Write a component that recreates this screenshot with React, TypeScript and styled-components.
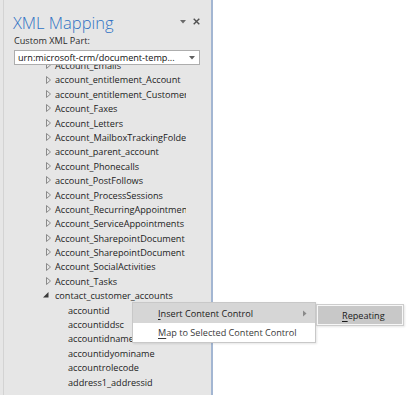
import React from "react";
import styled, { createGlobalStyle } from "styled-components";

const Global = createGlobalStyle`
  html, body { margin: 0; padding: 0; background: #ffffff; }
  body { font-family: "Open Sans", "Noto Sans", "Liberation Sans", sans-serif; }
  #root { width: 410px; height: 395px; overflow: hidden; }
`;

const Page = styled.div`
  position: relative;
  width: 410px;
  height: 395px;
  display: flex;
  background: #ffffff;
`;

const Panel = styled.div`
  position: relative;
  box-sizing: border-box;
  width: 213px;
  height: 395px;
  background: #e6e6e6;
  border-right: 2px solid #a3b6d2;
  display: flex;
  flex-direction: column;
  padding: 0 11px 0 14px;
`;

const LeftRule = styled.div`
  position: absolute;
  left: 3px;
  top: 0;
  bottom: 0;
  width: 1px;
  background: #d3d3d3;
`;

const Header = styled.div`
  display: flex;
  align-items: flex-start;
  justify-content: space-between;
  padding-top: 13px;
  height: 20px;
`;

const Title = styled.div`
  font-family: "Open Sans", "Noto Sans", sans-serif;
  font-weight: 300;
  font-size: 16.5px;
  line-height: 20px;
  color: #2f72c4;
  margin-left: -1px;
`;

const Controls = styled.div`
  display: flex;
  align-items: center;
  gap: 7px;
  margin-top: 5px;
  margin-right: 0px;
`;

const Label = styled.div`
  margin-top: 2px;
  font-size: 9.15px;
  line-height: 12px;
  color: #2a2a2a;
`;

const Select = styled.div`
  box-sizing: border-box;
  margin-top: 3px;
  height: 15px;
  border: 1px solid #adadad;
  background: #fff;
  display: flex;
  align-items: center;
  justify-content: space-between;
  padding: 0 4px 0 3px;
  font-size: 9.15px;
  line-height: 13px;
  color: #111;
`;

const Tree = styled.div`
  flex: 1;
  overflow: hidden;
  margin-right: 14px;
`;

const List = styled.div`
  margin-top: -6px;
`;

const Row = styled.div<{ $level: number }>`
  height: 14.4px;
  line-height: 14.4px;
  display: flex;
  align-items: center;
  padding-left: ${(p) => (p.$level === 1 ? 32 : 54)}px;
  font-size: 9.15px;
  color: #222;
  white-space: nowrap;
`;

const Toggle = styled.span`
  width: 9px;
  flex: none;
  display: flex;
  align-items: center;
  height: 14.4px;
`;

const Menu = styled.div`
  position: absolute;
  left: 132px;
  top: 302px;
  width: 182px;
  background: #ffffff;
  border: 1px solid #c8c8c8;
  box-shadow: 1px 1px 2px rgba(0, 0, 0, 0.1);
`;

const MenuItem = styled.div<{ $active?: boolean }>`
  display: flex;
  align-items: center;
  justify-content: space-between;
  height: ${(p) => (p.$active ? 20 : 19)}px;
  padding: 0 8px 0 25px;
  font-size: 9.15px;
  color: ${(p) => (p.$active ? "#1a1a1a" : "#3a3a3a")};
  background: ${(p) => (p.$active ? "#d6d6d6" : "transparent")};
`;

const SubMenu = styled.div`
  position: absolute;
  left: 316px;
  top: 304px;
  width: 84px;
  background: #f7f7f7;
  border: 1px solid #cdcdcd;
  padding: 1px;
  box-shadow: 1px 1px 2px rgba(0, 0, 0, 0.1);
`;

const SubItem = styled.div`
  height: 18px;
  background: #c8c8c8;
  display: flex;
  align-items: center;
  padding-left: 24px;
  font-size: 9.15px;
  color: #1a1a1a;
`;

const U = styled.span`
  text-decoration: underline;
  text-underline-offset: 1.5px;
`;

const HollowTri = () => (
  <svg width="5" height="8" viewBox="0 0 5 8" style={{ marginTop: -2 }}>
    <polygon points="0.5,0.5 4.5,4 0.5,7.5" fill="none" stroke="#8a8a8a" strokeWidth="1" />
  </svg>
);

const FilledTri = () => (
  <svg width="6" height="6" viewBox="0 0 6 6" style={{ marginLeft: -3, marginTop: -3 }}>
    <polygon points="5.5,0 5.5,5.5 0,5.5" fill="#3a3a3a" />
  </svg>
);

const topItems = [
  "Account_Emails",
  "account_entitlement_Account",
  "account_entitlement_Customer",
  "Account_Faxes",
  "Account_Letters",
  "Account_MailboxTrackingFolder",
  "account_parent_account",
  "Account_Phonecalls",
  "account_PostFollows",
  "Account_ProcessSessions",
  "Account_RecurringAppointments",
  "Account_ServiceAppointments",
  "Account_SharepointDocument",
  "Account_SharepointDocument",
  "Account_SocialActivities",
  "Account_Tasks",
];

const children = [
  "accountid",
  "accountiddsc",
  "accountidname",
  "accountidyominame",
  "accountrolecode",
  "address1_addressid",
];

export default function App() {
  return (
    <Page>
      <Global />
      <Panel>
        <LeftRule />
        <Header>
          <Title>XML Mapping</Title>
          <Controls>
            <svg width="6" height="4" viewBox="0 0 6 4">
              <polygon points="0,0 6,0 3,3.5" fill="#6a6a6a" />
            </svg>
            <svg width="7" height="7" viewBox="0 0 7 7">
              <path d="M0.7 0.7 L6.3 6.3 M6.3 0.7 L0.7 6.3" stroke="#505050" strokeWidth="1.4" />
            </svg>
          </Controls>
        </Header>
        <Label>Custom XML Part:</Label>
        <Select>
          <span>urn:microsoft-crm/document-temp...</span>
          <svg width="6" height="4" viewBox="0 0 6 4">
            <polygon points="0,0 6,0 3,3.5" fill="#606060" />
          </svg>
        </Select>
        <Tree>
          <List>
            {topItems.map((t, i) => (
              <Row key={i} $level={1}>
                <Toggle>
                  <HollowTri />
                </Toggle>
                {t}
              </Row>
            ))}
            <Row $level={1}>
              <Toggle>
                <FilledTri />
              </Toggle>
              contact_customer_accounts
            </Row>
            {children.map((c) => (
              <Row key={c} $level={2}>
                {c}
              </Row>
            ))}
          </List>
        </Tree>
      </Panel>
      <Menu>
        <MenuItem $active>
          <span>
            <U>I</U>nsert Content Control
          </span>
          <svg width="4" height="7" viewBox="0 0 4 7">
            <polygon points="0,0.5 3.5,3.5 0,6.5" fill="#8a8a8a" />
          </svg>
        </MenuItem>
        <MenuItem>
          <span>
            <U>M</U>ap to Selected Content Control
          </span>
        </MenuItem>
      </Menu>
      <SubMenu>
        <SubItem>
          <span>
            <U>R</U>epeating
          </span>
        </SubItem>
      </SubMenu>
    </Page>
  );
}
